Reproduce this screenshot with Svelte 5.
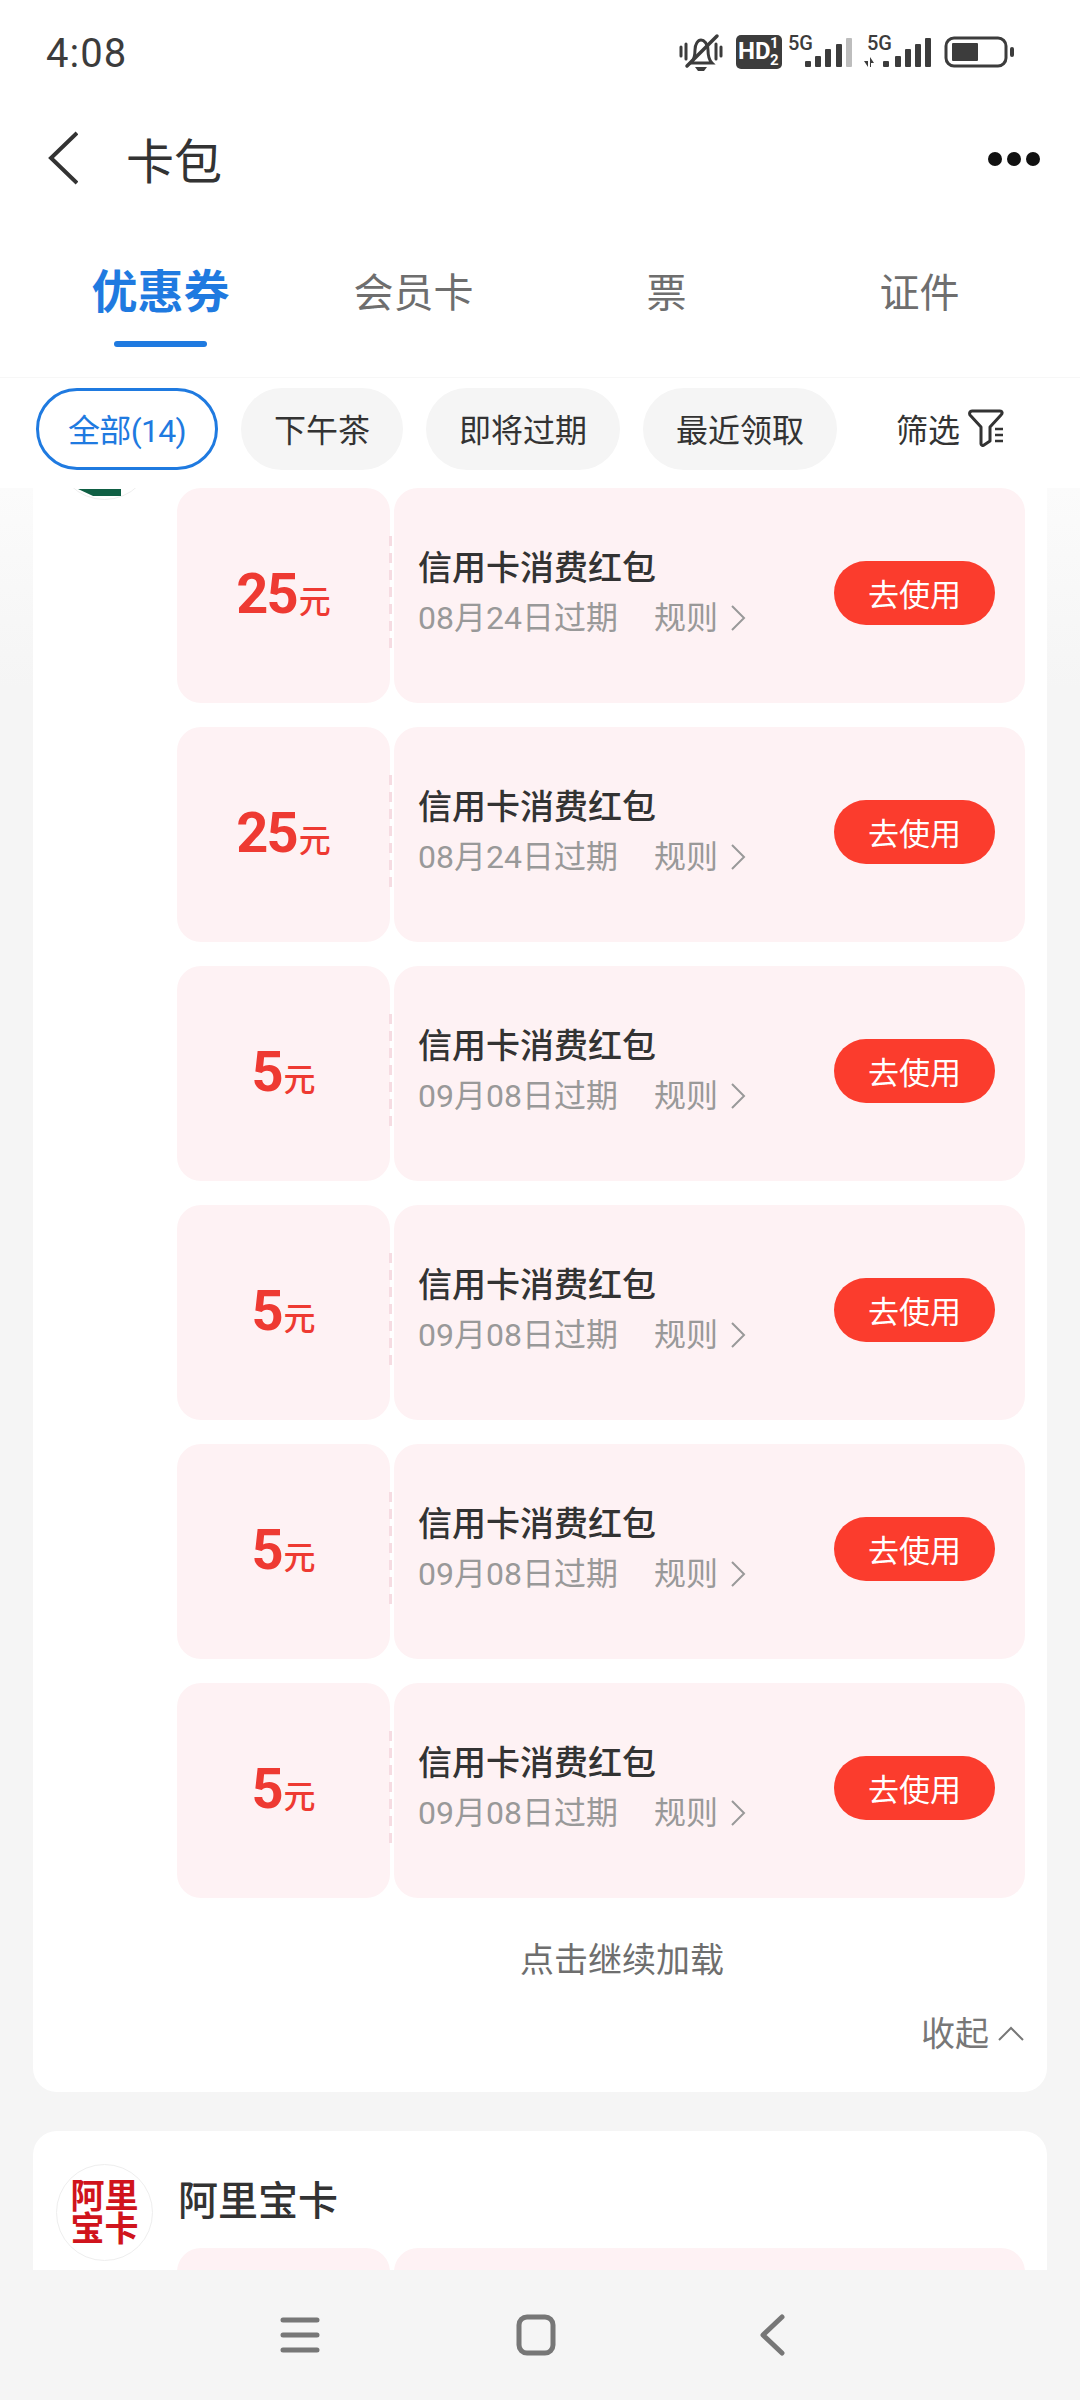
<script>
  const tabs = ['优惠券', '会员卡', '票', '证件'];
  const chips = ['下午茶', '即将过期', '最近领取'];
  const coupons = [
    { amount: 25, date: '08月24日过期' },
    { amount: 25, date: '08月24日过期' },
    { amount: 5, date: '09月08日过期' },
    { amount: 5, date: '09月08日过期' },
    { amount: 5, date: '09月08日过期' },
    { amount: 5, date: '09月08日过期' }
  ];
</script>

<div class="page">
  <div class="top">
    <div class="status">
      <span class="time">4:08</span>
      <svg class="status-icons" width="338" height="42" viewBox="0 0 338 42">
        <g fill="none" stroke="#3c3c3c" stroke-width="3" stroke-linecap="round">
          <path d="M3 15v9M43 15v9" />
          <path d="M8 12v15M38 12v15" />
          <path d="M13 31c3-3 4-6 4-13 0-6 3-10 6-10s7 4 7 10c0 7 1 10 4 13z" />
          <path d="M9 34 39 4" stroke-width="3.5" />
        </g>
        <path d="M17 35h12l-3 4h-6z" fill="#3c3c3c" />
        <rect x="58" y="3" width="46" height="34" rx="5" fill="#3c3c3c" />
        <text x="60" y="27" class="hd">HD</text>
        <text x="92" y="16" class="hd-n">1</text>
        <text x="92" y="33" class="hd-n">2</text>
        <text x="110" y="18" class="five-g">5G</text>
        <g fill="#3c3c3c">
          <rect x="127" y="29" width="6" height="6" rx="1" />
          <rect x="137" y="24" width="6" height="11" rx="1" />
          <rect x="147" y="17" width="6" height="18" rx="1" />
          <rect x="158" y="12" width="6" height="23" rx="1" />
          <rect x="168" y="6" width="6" height="29" rx="1" fill="#bdbdbd" />
        </g>
        <text x="189" y="18" class="five-g">5G</text>
        <g fill="#3c3c3c">
          <path d="M190 25v4h-4l4 6zM192 35v-10l4 6h-3v4z" />
          <rect x="205" y="29" width="6" height="6" rx="1" />
          <rect x="217" y="24" width="6" height="11" rx="1" />
          <rect x="227" y="17" width="6" height="18" rx="1" />
          <rect x="237" y="12" width="6" height="23" rx="1" />
          <rect x="247" y="6" width="6" height="29" rx="1" />
        </g>
        <rect x="268" y="6" width="60" height="28" rx="8" fill="none" stroke="#3c3c3c" stroke-width="3" />
        <rect x="274" y="11" width="26" height="18" rx="1" fill="#3c3c3c" />
        <rect x="332" y="15" width="4" height="10" rx="2" fill="#3c3c3c" />
      </svg>
    </div>

    <div class="title-bar">
      <svg class="back" width="34" height="54" viewBox="0 0 34 54">
        <path d="M33 2 7 27l26 25" fill="none" stroke="#333" stroke-width="4" />
      </svg>
      <span class="title">卡包</span>
      <div class="dots"><i></i><i></i><i></i></div>
    </div>

    <div class="tabs">
      {#each tabs as tab, i}
        <div class="tab" class:active={i === 0}>
          <span>{tab}</span>
          {#if i === 0}<b class="underline"></b>{/if}
        </div>
      {/each}
    </div>

    <div class="chips">
      <span class="chip selected">全部(14)</span>
      {#each chips as chip}
        <span class="chip">{chip}</span>
      {/each}
      <span class="filter">
        筛选
        <svg width="36" height="38" viewBox="0 0 36 38">
          <path d="M4 2h28c2 0 3 2 1 4L22 18v14l-6 4c-1 1-3 0-3-1V18L2 6C1 4 2 2 4 2z" fill="none" stroke="#333" stroke-width="3" stroke-linejoin="round" />
          <path d="M27 20h8M27 26h8M27 32h8" stroke="#333" stroke-width="2.5" />
        </svg>
      </span>
    </div>
  </div>

  <div class="scroll">
    <section class="card first">
      <div class="stub-logo"></div>
      <div class="coupons">
        {#each coupons as c}
          <div class="coupon">
            <div class="amount">
              <strong>{c.amount}</strong><small>元</small>
            </div>
            <div class="detail">
              <div class="info">
                <div class="name">信用卡消费红包</div>
                <div class="meta">
                  <span>{c.date}</span>
                  <span class="rule">规则
                    <svg width="16" height="28" viewBox="0 0 16 28">
                      <path d="M2 2l12 12L2 26" fill="none" stroke="#999" stroke-width="2" />
                    </svg>
                  </span>
                </div>
              </div>
              <button class="use">去使用</button>
            </div>
          </div>
        {/each}
      </div>
      <div class="load-more">点击继续加载</div>
      <div class="collapse">
        收起
        <svg width="28" height="16" viewBox="0 0 28 16">
          <path d="M2 14 14 2l12 12" fill="none" stroke="#777" stroke-width="2" />
        </svg>
      </div>
    </section>

    <section class="card second">
      <div class="brand">
        <div class="logo">
          <span>阿里宝卡</span>
        </div>
        <span class="brand-name">阿里宝卡</span>
      </div>
      <div class="coupon peek">
        <div class="amount"></div>
        <div class="detail"></div>
      </div>
    </section>
  </div>

  <nav class="nav">
    <svg width="40" height="38" viewBox="0 0 40 38">
      <path d="M3 4h34M3 19h34M3 34h34" stroke="#777" stroke-width="5" stroke-linecap="round" />
    </svg>
    <svg width="40" height="42" viewBox="0 0 40 42">
      <rect x="3" y="3" width="34" height="36" rx="8" fill="none" stroke="#777" stroke-width="5" />
    </svg>
    <svg width="28" height="42" viewBox="0 0 28 42">
      <path d="M24 3 5 21l19 18" fill="none" stroke="#777" stroke-width="5" stroke-linecap="round" stroke-linejoin="round" />
    </svg>
  </nav>
</div>

<style>
  :global(body) {
    margin: 0;
    background: #f5f5f5;
  }
  .page {
    width: 1080px;
    height: 2400px;
    display: flex;
    flex-direction: column;
    overflow: hidden;
    font-family: Roboto, "Noto Sans CJK SC", sans-serif;
    background: #f5f5f5;
  }
  .top {
    background: #fff;
    flex: none;
    height: 488px;
    position: relative;
    z-index: 1;
  }
  .status {
    height: 106px;
    display: flex;
    justify-content: space-between;
    align-items: center;
    padding: 0 64px 0 46px;
  }
  .time {
    font-size: 40px;
    color: #3c3c3c;
    letter-spacing: 1px;
  }
  .hd { font: 700 24px Roboto, sans-serif; fill: #fff; }
  .hd-n { font: 700 15px Roboto, sans-serif; fill: #fff; }
  .five-g { font: 500 20px Roboto, sans-serif; fill: #3c3c3c; }

  .title-bar {
    height: 104px;
    margin-bottom: 2px;
    display: flex;
    align-items: center;
    padding: 0 40px 0 44px;
  }
  .title {
    font-size: 48px;
    color: #333;
    margin-left: 48px;
    flex: 1;
  }
  .dots {
    display: flex;
    gap: 5px;
    margin-top: 2px;
  }
  .dots i {
    width: 14px;
    height: 14px;
    border-radius: 50%;
    background: #111;
  }

  .tabs {
    height: 165px;
    display: grid;
    grid-template-columns: repeat(4, 253px);
    margin-left: 34px;
  }
  .tab {
    position: relative;
    display: flex;
    justify-content: center;
    padding-top: 52px;
    font-size: 40px;
    line-height: 60px;
    color: #6e6e6e;
  }
  .tab.active {
    color: #1f7ae0;
    font-size: 46px;
    font-weight: 700;
    padding-top: 50px;
  }
  .underline {
    position: absolute;
    left: 80px;
    top: 129px;
    width: 93px;
    height: 6px;
    border-radius: 3px;
    background: #1f7ae0;
  }

  .chips {
    height: 111px;
    display: flex;
    align-items: flex-start;
    gap: 23px;
    padding: 10px 0 0 36px;
    border-top: 1px solid #f7f7f7;
    box-sizing: border-box;
  }
  .chip {
    height: 82px;
    padding: 0 33px 2px;
    border-radius: 41px;
    background: #f5f5f5;
    color: #333;
    font-size: 32px;
    display: flex;
    align-items: center;
    box-sizing: border-box;
  }
  .chip.selected {
    width: 182px;
    padding: 0 0 2px;
    justify-content: center;
    background: #fff;
    color: #1f7ae0;
    border: 3px solid #1f7ae0;
    letter-spacing: -0.7px;
  }
  .filter {
    height: 80px;
    margin-left: 36px;
    font-size: 32px;
    color: #333;
    display: flex;
    align-items: center;
    gap: 8px;
  }

  .scroll {
    flex: 1;
    min-height: 0;
    overflow: hidden;
    padding: 0 33px;
    background: linear-gradient(#fbfbfb, #f5f5f5 200px);
  }
  .card {
    background: #fff;
    border-radius: 24px;
  }
  .card.first {
    height: 1604px;
    position: relative;
    border-radius: 0 0 24px 24px;
  }
  .stub-logo {
    position: absolute;
    left: 23px;
    top: -85px;
    width: 97px;
    height: 97px;
    border-radius: 50%;
    background: #fff;
    border: 1px solid #eee;
    box-sizing: border-box;
    overflow: hidden;
  }
  .stub-logo::after {
    content: "";
    position: absolute;
    left: 21px;
    width: 43px;
    top: 85px;
    height: 7px;
    background: #0f5f44;
    clip-path: polygon(0 0, 100% 0, 100% 100%, 35% 100%);
  }
  .coupons {
    position: relative;
    margin-left: 144px;
    margin-right: 22px;
    display: flex;
    flex-direction: column;
    gap: 24px;
  }
  .coupon {
    display: flex;
    height: 215px;
    gap: 4px;
  }
  .amount {
    position: relative;
    width: 213px;
    flex: none;
    background: #fef2f4;
    border-radius: 24px;
    display: flex;
    align-items: baseline;
    justify-content: center;
    padding-top: 76px;
    box-sizing: border-box;
    color: #ee3a32;
  }
  .coupon:not(.peek) .amount::after {
    content: "";
    position: absolute;
    right: -2px;
    top: 48px;
    bottom: 52px;
    width: 3px;
    background: repeating-linear-gradient(#f6dce2 0 10px, transparent 10px 17px);
  }
  .amount strong {
    font-size: 56px;
    line-height: 60px;
    font-weight: 700;
    letter-spacing: -2px;
  }
  .amount small {
    font-size: 32px;
    font-weight: 500;
    margin-left: 2px;
  }
  .detail {
    flex: 1;
    background: #fef2f4;
    border-radius: 24px;
    display: flex;
    align-items: center;
    justify-content: space-between;
    padding: 0 30px 0 24px;
  }
  .info {
    margin-top: -7px;
  }
  .name {
    font-size: 34px;
    line-height: 48px;
    color: #333;
    font-weight: 500;
  }
  .meta {
    margin-top: 4px;
    font-size: 32px;
    line-height: 44px;
    color: #999;
    display: flex;
    gap: 36px;
  }
  .rule {
    display: flex;
    align-items: center;
    gap: 12px;
  }
  .use {
    width: 161px;
    height: 64px;
    margin-top: -6px;
    border: none;
    border-radius: 32px;
    background: #fb3c2d;
    color: #fff;
    font: 31px Roboto, "Noto Sans CJK SC", sans-serif;
    padding: 0;
  }
  .load-more {
    margin-top: 37px;
    text-align: center;
    margin-left: 164px;
    font-size: 34px;
    line-height: 50px;
    color: #6e6e6e;
  }
  .collapse {
    position: absolute;
    right: 22px;
    top: 1521px;
    font-size: 34px;
    line-height: 50px;
    color: #777;
    display: flex;
    align-items: center;
    gap: 8px;
  }
  .card.second {
    margin-top: 39px;
    height: 300px;
    padding: 33px 22px 0 23px;
    box-sizing: border-box;
  }
  .brand {
    display: flex;
    align-items: flex-start;
  }
  .logo {
    width: 97px;
    height: 97px;
    flex: none;
    border-radius: 50%;
    border: 1px solid #eee;
    box-sizing: border-box;
    color: #d0141c;
    font-size: 34px;
    font-weight: 700;
    line-height: 33px;
    display: flex;
    align-items: center;
    justify-content: center;
  }
  .logo span {
    width: 70px;
    text-align: center;
  }
  .brand-name {
    margin-left: 25px;
    margin-top: 8px;
    font-size: 40px;
    line-height: 60px;
    color: #333;
    font-weight: 500;
  }
  .coupon.peek {
    margin: -13px 0 0 121px;
  }
  .nav {
    flex: none;
    height: 130px;
    padding-right: 8px;
    background: #f5f5f5;
    display: grid;
    grid-template-columns: repeat(3, 236px);
    justify-content: center;
    justify-items: center;
    align-items: center;
    position: relative;
    z-index: 1;
  }
</style>
